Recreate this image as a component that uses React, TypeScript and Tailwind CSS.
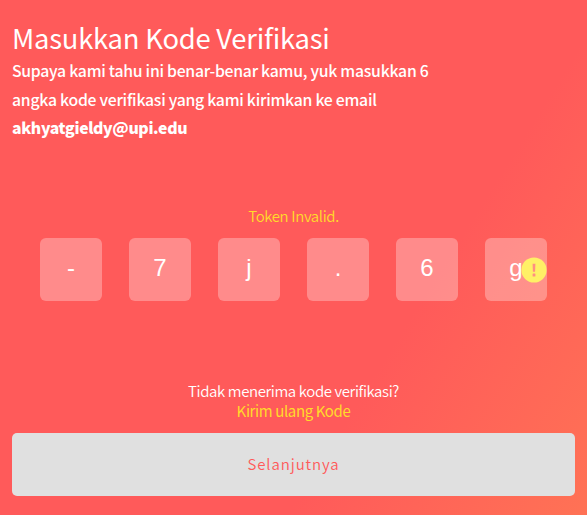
import React from "react";

const code = ["-", "7", "j", ".", "6", "g"];

function CodeBox({ value, invalid }: { value: string; invalid: boolean }) {
  return (
    <div className="relative flex h-[63px] w-[62px] items-center justify-center rounded-md bg-white/30 pb-[3px] font-['Liberation_Sans',Arial,sans-serif] text-2xl leading-none text-white">
      {value}
      {invalid && (
        <svg className="absolute top-[19px] right-0 h-[26px] w-[26px]" viewBox="0 0 26 26" aria-hidden="true">
          <circle cx="13" cy="13" r="12.6" fill="#fff066" />
          <path d="M11.6 6.8h2.8l-.3 8h-2.2z" fill="#ff8f82" />
          <rect x="11.6" y="16.6" width="2.8" height="2.8" rx=".5" fill="#ff8f82" />
        </svg>
      )}
    </div>
  );
}

export default function App() {
  return (
    <main className="flex h-[515px] w-[587px] flex-col overflow-hidden bg-[linear-gradient(122deg,#ff5a5a_67%,#ff7255_100%)] px-3 pt-5 font-['Noto_Sans_CJK_SC',sans-serif] text-white">
      <h1 className="mb-0.5 h-[35px] text-[27.4px] leading-[35px] tracking-[-0.24px] whitespace-nowrap">Masukkan Kode Verifikasi</h1>
      <p className="w-[440px] text-[15.8px] leading-[28.5px] font-medium tracking-[-0.27px] whitespace-nowrap">
        Supaya kami tahu ini benar-benar kamu, yuk masukkan 6<br />
        angka kode verifikasi yang kami kirimkan ke email<br />
        <strong className="font-black tracking-[-0.36px]">akhyatgieldy@upi.edu</strong>
      </p>
      <p className="mt-[63px] h-5 text-center text-[15px] leading-5 font-[350] tracking-[-0.38px] text-[#ffdb2a]">Token Invalid.</p>
      <div className="mt-3 flex justify-between px-7">
        {code.map((value, index) => (
          <CodeBox key={index} value={value} invalid={index === code.length - 1} />
        ))}
      </div>
      <div className="mt-20 text-center text-[15px] leading-5 font-[350] tracking-[-0.39px]">
        <p>Tidak menerima kode verifikasi?</p>
        <a className="block font-normal text-[#ffdb2a]">Kirim ulang Kode</a>
      </div>
      <button className="mt-3 h-[63px] w-full rounded-[5px] bg-[#e0e0e0] text-[15px] font-[350] tracking-[0.9px] text-[#ff5a5a]">
        Selanjutnya
      </button>
    </main>
  );
}
